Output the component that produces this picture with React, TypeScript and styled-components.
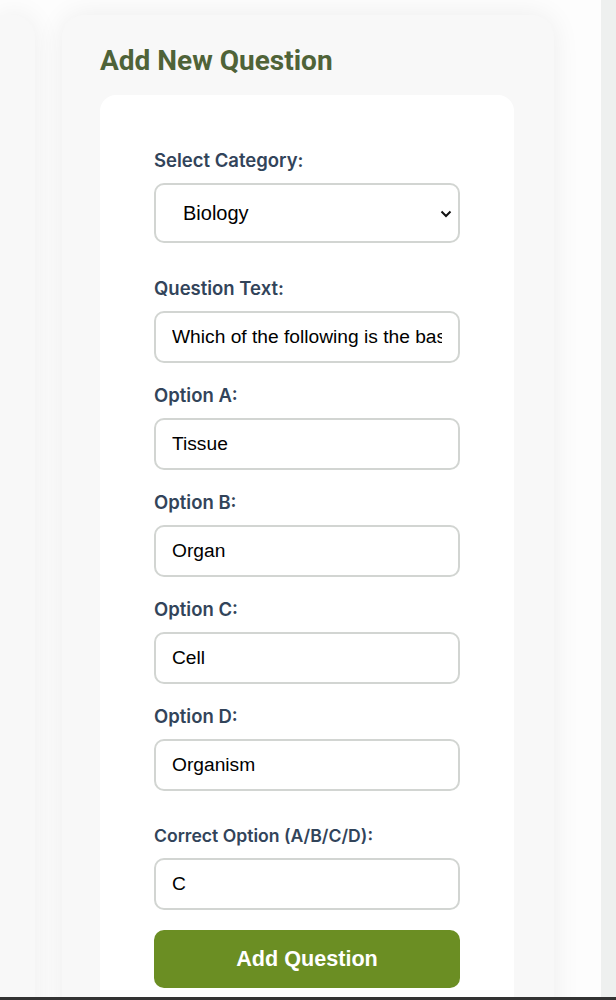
import React from 'react'
import styled, { createGlobalStyle } from 'styled-components'

const GlobalStyle = createGlobalStyle`
  html, body {
    margin: 0;
    padding: 0;
    background: #fdfdfd;
  }
  * {
    box-sizing: border-box;
  }
`

const Page = styled.div`
  display: flex;
  flex-direction: column;
`

const Main = styled.main`
  height: 997px;
  overflow: hidden;
  display: flex;
  align-items: flex-start;
`

const Panels = styled.div`
  flex: 1;
  display: flex;
  gap: 27px;
  padding-top: 15px;
  height: 100%;
`

const Panel = styled.section<{ stub?: boolean }>`
  background: #f8f8f8;
  border-radius: ${(p) => (p.stub ? '0 22px 22px 0' : '22px')};
  box-shadow: 0 0 28px rgba(0, 0, 0, 0.07);
  width: ${(p) => (p.stub ? '35px' : '492px')};
  height: 1100px;
  padding: ${(p) => (p.stub ? '0' : '29px 40px 27px 38px')};
  flex-shrink: 0;
`

const Track = styled.div`
  width: 15px;
  height: 100%;
  background: #eef0ef;
`

const Title = styled.h2`
  margin: 0 0 17px;
  font-family: 'Roboto', 'Inter', sans-serif;
  font-size: 28px;
  font-weight: 700;
  color: #4f6338;
  line-height: 34px;
`

const Form = styled.form`
  background: #ffffff;
  border-radius: 16px;
  padding: 55px 54px 54px;
  display: flex;
  flex-direction: column;
`

const Field = styled.div<{ spaced?: boolean }>`
  display: flex;
  flex-direction: column;
  margin-top: ${(p) => (p.spaced ? '35px' : '22px')};
  &:first-child {
    margin-top: 0;
  }
`

const Label = styled.label<{ small?: boolean }>`
  font-family: 'Inter', 'Liberation Sans', sans-serif;
  font-size: ${(p) => (p.small ? '17.6px' : '18.5px')};
  font-weight: 600;
  color: #32445a;
  line-height: 20px;
  margin-bottom: ${(p) => (p.small ? '12px' : '13px')};
`

const Input = styled.input`
  width: 100%;
  height: 52px;
  padding: 0 16px;
  border: 2px solid #d2d5d2;
  border-radius: 10px;
  font-family: 'Liberation Sans', Arial, sans-serif;
  font-size: 19.2px;
  color: #000;
  background: #fff;
  outline: none;
`

const SelectBox = styled.div`
  position: relative;
  width: 100%;
`

const Select = styled.select`
  display: block;
  width: 100%;
  height: 60px;
  padding: 0 40px 0 27px;
  border: 2px solid #d2d5d2;
  border-radius: 10px;
  font-family: 'Liberation Sans', Arial, sans-serif;
  font-size: 20px;
  color: #000;
  background: #fff;
  appearance: none;
  outline: none;
`

const Chevron = styled.svg`
  position: absolute;
  right: 8px;
  top: 50%;
  margin-top: -3px;
  pointer-events: none;
`

const Submit = styled.button`
  margin-top: 20px;
  height: 58px;
  width: 100%;
  border: none;
  border-radius: 10px;
  background: #6b8e23;
  color: #ffffff;
  font-family: 'Liberation Sans', Arial, sans-serif;
  font-size: 21.6px;
  font-weight: 700;
  cursor: pointer;
`

const Footer = styled.footer`
  height: 60px;
  background: #333333;
`

const options = [
  { label: 'Option A:', value: 'Tissue' },
  { label: 'Option B:', value: 'Organ' },
  { label: 'Option C:', value: 'Cell' },
  { label: 'Option D:', value: 'Organism' },
]

export default function App() {
  return (
    <Page>
      <GlobalStyle />
      <Main>
        <Panels>
          <Panel stub />
          <Panel>
            <Title>Add New Question</Title>
            <Form onSubmit={(e) => e.preventDefault()}>
              <Field>
                <Label htmlFor="category">Select Category:</Label>
                <SelectBox>
                  <Select id="category" defaultValue="Biology">
                    <option>Biology</option>
                    <option>Chemistry</option>
                    <option>Physics</option>
                  </Select>
                  <Chevron width="12" height="8" viewBox="0 0 12 8">
                    <path d="M1.5 1.5 L6 6 L10.5 1.5" fill="none" stroke="#111" strokeWidth="2" />
                  </Chevron>
                </SelectBox>
              </Field>
              <Field spaced>
                <Label htmlFor="qtext">Question Text:</Label>
                <Input id="qtext" defaultValue="Which of the following is the basic unit of life?" />
              </Field>
              {options.map((o) => (
                <Field key={o.label}>
                  <Label>{o.label}</Label>
                  <Input defaultValue={o.value} />
                </Field>
              ))}
              <Field spaced>
                <Label htmlFor="correct" small>Correct Option (A/B/C/D):</Label>
                <Input id="correct" defaultValue="C" />
              </Field>
              <Submit type="submit">Add Question</Submit>
            </Form>
          </Panel>
        </Panels>
        <Track />
      </Main>
      <Footer />
    </Page>
  )
}
